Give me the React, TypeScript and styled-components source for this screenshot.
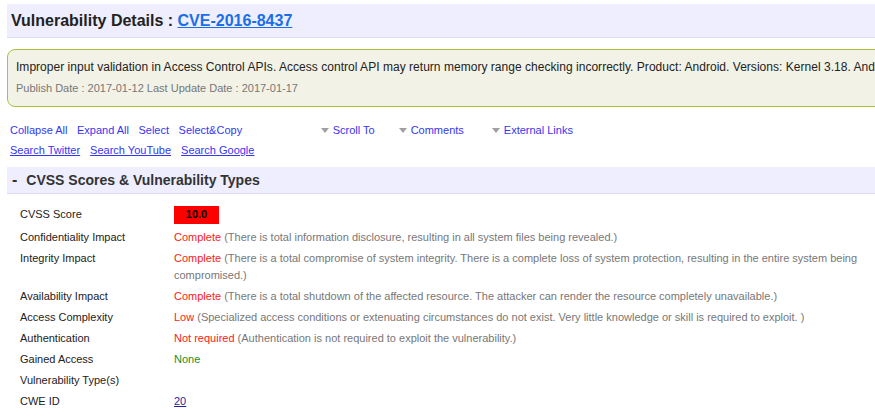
import React from "react";
import styled, { createGlobalStyle } from "styled-components";

const Global = createGlobalStyle`
  html, body {
    margin: 0;
    padding: 0;
    background: #ffffff;
    overflow: hidden;
  }
  body {
    font-family: "Liberation Sans", Arial, sans-serif;
    color: #222;
  }
`;

const Page = styled.div`
  width: 900px;
  padding: 4px 0 0 7px;
`;

const TitleBar = styled.div`
  height: 33px;
  background: #eeeeff;
  border-bottom: 1px solid #dcdcf5;
  display: flex;
  align-items: center;
  padding-left: 4px;
`;

const Title = styled.h1`
  margin: 0;
  font-size: 16px;
  font-weight: bold;
  color: #222;
`;

const TitleLink = styled.a`
  color: #1a6ee8;
  text-decoration: underline;
`;

const SummaryBox = styled.div`
  margin-top: 11px;
  border: 1px solid #a9c23c;
  border-radius: 8px;
  background: #f2f2e7;
  padding: 9px 0 0 8px;
  box-sizing: border-box;
  height: 58px;
`;

const Summary = styled.div`
  font-size: 12px;
  line-height: 16px;
  white-space: nowrap;
  letter-spacing: 0.03px;
  color: #222;
`;

const Dates = styled.div`
  margin-top: 5px;
  font-size: 11px;
  line-height: 16px;
  color: #777;
`;

const LinkArea = styled.div`
  margin-top: 13px;
  padding-left: 3px;
`;

const LinkRow = styled.div`
  display: flex;
  align-items: center;
  height: 20px;
  font-size: 11px;
`;

const Action = styled.a<{ $underline?: boolean }>`
  color: #3535f5;
  text-decoration: ${(p) => (p.$underline ? "underline" : "none")};
  margin-right: ${(p) => (p.$underline ? 10 : 9.5)}px;
  cursor: pointer;
`;

const Drop = styled.a<{ $left: number }>`
  display: flex;
  align-items: center;
  color: #3535f5;
  margin-left: ${(p) => p.$left}px;
  cursor: pointer;
`;

const Caret = styled.span`
  width: 0;
  height: 0;
  border-left: 4.5px solid transparent;
  border-right: 4.5px solid transparent;
  border-top: 5px solid #a0a0a0;
  margin-right: 4px;
`;

const SectionBar = styled.div`
  margin-top: 7px;
  height: 26px;
  background: #eeeeff;
  border-bottom: 1px solid #dcdcf5;
  display: flex;
  align-items: center;
  padding-left: 5px;
  font-size: 14px;
  font-weight: bold;
  color: #333;
`;

const Dash = styled.span`
  font-size: 16px;
  margin-right: 9px;
`;

const Table = styled.div`
  margin-top: 9px;
  padding-left: 13px;
  display: grid;
  grid-template-columns: 154px 706px;
  font-size: 11px;
  line-height: 16.5px;
`;

const Label = styled.div`
  padding: 2.5px 0 2px;
  color: #222;
`;

const Value = styled.div`
  padding: 2.5px 0 2px;
  color: #777;
`;

const Score = styled.div`
  width: 45px;
  height: 18px;
  margin-bottom: 1px;
  background: #ff0000;
  color: #000;
  font-weight: bold;
  display: flex;
  align-items: center;
  justify-content: center;
`;

const Level = styled.span<{ $tone: "bad" | "good" }>`
  color: ${(p) => (p.$tone === "bad" ? "#ff2020" : "#1e8c1e")};
`;

const Cwe = styled.a`
  color: #1f1fa0;
  text-decoration: underline;
`;

type Row = {
  label: string;
  level?: string;
  tone?: "bad" | "good";
  note?: string;
};

const rows: Row[] = [
  {
    label: "Confidentiality Impact",
    level: "Complete",
    tone: "bad",
    note: "(There is total information disclosure, resulting in all system files being revealed.)",
  },
  {
    label: "Integrity Impact",
    level: "Complete",
    tone: "bad",
    note: "(There is a total compromise of system integrity. There is a complete loss of system protection, resulting in the entire system being compromised.)",
  },
  {
    label: "Availability Impact",
    level: "Complete",
    tone: "bad",
    note: "(There is a total shutdown of the affected resource. The attacker can render the resource completely unavailable.)",
  },
  {
    label: "Access Complexity",
    level: "Low",
    tone: "bad",
    note: "(Specialized access conditions or extenuating circumstances do not exist. Very little knowledge or skill is required to exploit. )",
  },
  {
    label: "Authentication",
    level: "Not required",
    tone: "bad",
    note: "(Authentication is not required to exploit the vulnerability.)",
  },
  { label: "Gained Access", level: "None", tone: "good" },
  { label: "Vulnerability Type(s)" },
];

export default function App() {
  return (
    <>
      <Global />
      <Page>
        <TitleBar>
          <Title>
            Vulnerability Details : <TitleLink href="#">CVE-2016-8437</TitleLink>
          </Title>
        </TitleBar>

        <SummaryBox>
          <Summary>
            Improper input validation in Access Control APIs. Access control API may return memory range checking
            incorrectly. Product: Android. Versions: Kernel 3.18. Android ID: A-31622698. References: QC-CR#1059604.
          </Summary>
          <Dates>Publish Date : 2017-01-12 Last Update Date : 2017-01-17</Dates>
        </SummaryBox>

        <LinkArea>
          <LinkRow>
            <Action>Collapse All</Action>
            <Action>Expand All</Action>
            <Action>Select</Action>
            <Action>Select&amp;Copy</Action>
            <Drop $left={69}>
              <Caret />
              Scroll To
            </Drop>
            <Drop $left={24}>
              <Caret />
              Comments
            </Drop>
            <Drop $left={28}>
              <Caret />
              External Links
            </Drop>
          </LinkRow>
          <LinkRow>
            <Action $underline>Search Twitter</Action>
            <Action $underline>Search YouTube</Action>
            <Action $underline>Search Google</Action>
          </LinkRow>
        </LinkArea>

        <SectionBar>
          <Dash>-</Dash>
          CVSS Scores &amp; Vulnerability Types
        </SectionBar>

        <Table>
          <Label>CVSS Score</Label>
          <Value>
            <Score>10.0</Score>
          </Value>
          {rows.map((r) => (
            <React.Fragment key={r.label}>
              <Label>{r.label}</Label>
              <Value>
                {r.level && <Level $tone={r.tone!}>{r.level}</Level>}
                {r.note && <> {r.note}</>}
              </Value>
            </React.Fragment>
          ))}
          <Label>CWE ID</Label>
          <Value>
            <Cwe href="#">20</Cwe>
          </Value>
        </Table>
      </Page>
    </>
  );
}
